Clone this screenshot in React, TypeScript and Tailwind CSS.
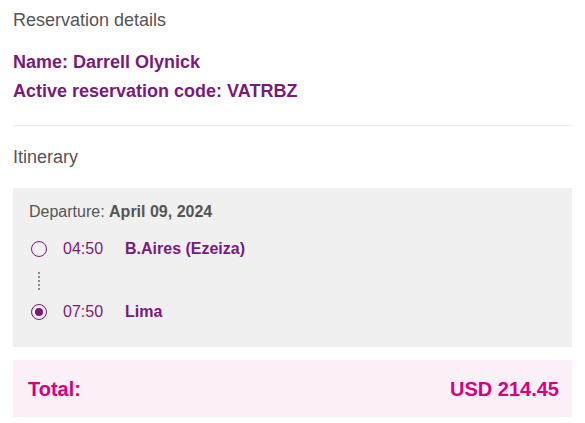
import React from 'react';

const STOPS = [
  { time: '04:50', city: 'B.Aires (Ezeiza)', active: false },
  { time: '07:50', city: 'Lima', active: true },
];

function Dot({ active }: { active: boolean }) {
  return (
    <span className="w-[16px] h-[16px] rounded-full border-[1.5px] border-[#7a1a7c] flex items-center justify-center shrink-0">
      {active && <span className="w-[8px] h-[8px] rounded-full bg-[#7a1a7c]" />}
    </span>
  );
}

function Stop({ time, city, active }: { time: string; city: string; active: boolean }) {
  return (
    <div className="flex items-center text-[16px] leading-[20px] text-[#7a1a7c]">
      <span className="ml-[2px]"><Dot active={active} /></span>
      <span className="ml-[16px] w-[62px]">{time}</span>
      <span className="font-bold">{city}</span>
    </div>
  );
}

export default function App() {
  return (
    <div className="bg-white w-[585px] h-[423px] px-[13px] font-['Liberation_Sans',Arial,sans-serif]">
      <h2 className="pt-[9px] text-[18px] leading-[22px] text-[#555]">Reservation details</h2>

      <div className="mt-[17px] text-[18px] leading-[29px] font-bold text-[#7a1a7c]">
        <div>Name: Darrell Olynick</div>
        <div>Active reservation code: VATRBZ</div>
      </div>

      <hr className="mt-[19px] border-0 border-t border-[#ececec]" />

      <h3 className="mt-[20px] text-[18px] leading-[22px] text-[#555]">Itinerary</h3>

      <div className="mt-[20px] bg-[#f0f0f0] pt-[14px] pb-[25px] px-[16px]">
        <div className="text-[16px] leading-[20px] text-[#555]">
          Departure: <span className="font-bold">April 09, 2024</span>
        </div>
        <div className="mt-[17px]">
          <Stop {...STOPS[0]} />
        </div>
        <div className="ml-[9px] mt-[13px] mb-[12px] flex flex-col gap-[2px]">
          {[0, 1, 2, 3, 4].map((i) => (
            <span key={i} className="w-[2px] h-[2px] bg-[#666] rounded-full" />
          ))}
        </div>
        <Stop {...STOPS[1]} />
      </div>

      <div className="mt-[13px] h-[57px] bg-[#fcf0f8] pl-[15px] pr-[13px] pt-[1px] flex items-center justify-between text-[20px] font-bold text-[#d6007f]">
        <span>Total:</span>
        <span>USD 214.45</span>
      </div>
    </div>
  );
}
